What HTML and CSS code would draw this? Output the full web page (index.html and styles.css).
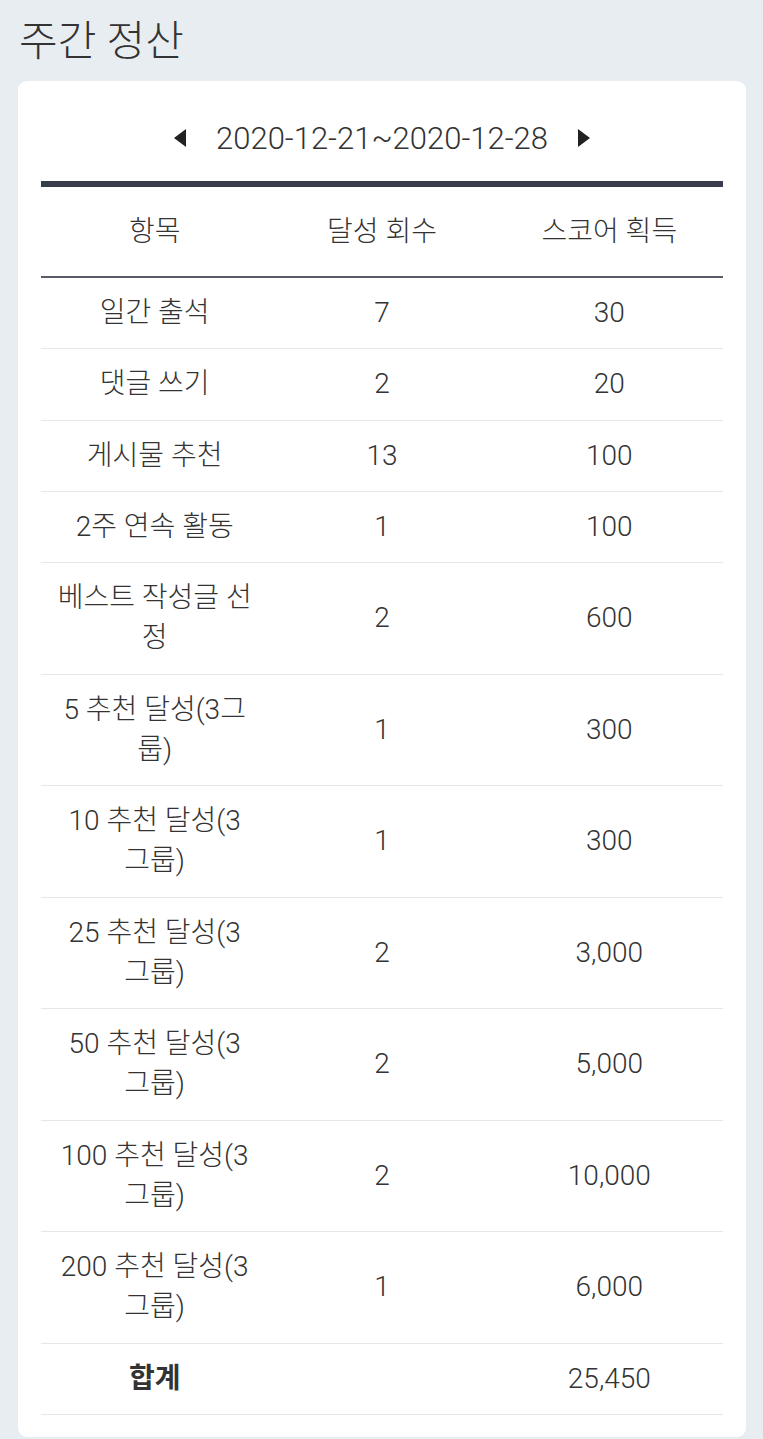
FILE: index.html
```html
<!DOCTYPE html>
<html lang="ko">
<head>
<meta charset="utf-8">
<title>주간 정산</title>
<link rel="stylesheet" href="styles.css">
</head>
<body>
<main class="page">
  <h1 class="title">주간 정산</h1>
  <section class="card">
    <div class="period">
      <button class="nav" aria-label="이전 주">
        <svg width="12" height="18" viewBox="0 0 12 18"><path d="M12 0 L0 9 L12 18 Z" fill="#222"/></svg>
      </button>
      <span class="range">2020-12-21~2020-12-28</span>
      <button class="nav" aria-label="다음 주">
        <svg width="12" height="18" viewBox="0 0 12 18"><path d="M0 0 L12 9 L0 18 Z" fill="#222"/></svg>
      </button>
    </div>
    <table class="score">
      <thead>
        <tr><th>항목</th><th>달성 회수</th><th>스코어 획득</th></tr>
      </thead>
      <tbody>
        <tr><td>일간 출석</td><td>7</td><td>30</td></tr>
        <tr><td>댓글 쓰기</td><td>2</td><td>20</td></tr>
        <tr><td>게시물 추천</td><td>13</td><td>100</td></tr>
        <tr><td>2주 연속 활동</td><td>1</td><td>100</td></tr>
        <tr class="tall"><td>베스트 작성글 선<br>정</td><td>2</td><td>600</td></tr>
        <tr class="tall"><td>5 추천 달성(3그<br>룹)</td><td>1</td><td>300</td></tr>
        <tr class="tall"><td>10 추천 달성(3<br>그룹)</td><td>1</td><td>300</td></tr>
        <tr class="tall"><td>25 추천 달성(3<br>그룹)</td><td>2</td><td>3,000</td></tr>
        <tr class="tall"><td>50 추천 달성(3<br>그룹)</td><td>2</td><td>5,000</td></tr>
        <tr class="tall"><td>100 추천 달성(3<br>그룹)</td><td>2</td><td>10,000</td></tr>
        <tr class="tall"><td>200 추천 달성(3<br>그룹)</td><td>1</td><td>6,000</td></tr>
        <tr class="total"><td>합계</td><td></td><td>25,450</td></tr>
      </tbody>
    </table>
  </section>
</main>
</body>
</html>
```
FILE: styles.css
```css
html, body {
  margin: 0;
  padding: 0;
  background: #e8edf1;
}
body {
  font-family: Roboto, "Noto Sans CJK KR", sans-serif;
  font-weight: 300;
  color: #333;
}
.page {
  padding: 0 17px 2px 18px;
}
.title {
  margin: 0;
  padding: 16px 0 0 1px;
  height: 81px;
  box-sizing: border-box;
  font-size: 42px;
  font-weight: 300;
  line-height: 52px;
  color: #333;
}
.card {
  background: #fff;
  border-radius: 9px;
  padding: 0 23px 22px;
}
.period {
  height: 100px;
  box-sizing: border-box;
  padding-top: 14px;
  display: flex;
  align-items: center;
  justify-content: center;
  gap: 30px;
}
.nav {
  border: 0;
  background: none;
  padding: 0;
  display: flex;
  align-items: center;
}
.range {
  font-size: 31px;
  color: #333;
}
.score {
  width: 100%;
  border-collapse: collapse;
  table-layout: fixed;
  border-top: 6px solid #373d4c;
}
.score th,
.score td {
  width: 33.333%;
  text-align: center;
  font-size: 28px;
  line-height: 40px;
  white-space: nowrap;
  padding: 0;
}
.score th {
  font-weight: 300;
  height: 89px;
  border-bottom: 2px solid #585c67;
}
.score td {
  height: 70.25px;
  border-bottom: 1px solid #e6e7e9;
}
.score .tall td {
  height: 110.5px;
}
.score .total td:first-child {
  font-weight: 700;
}
```
